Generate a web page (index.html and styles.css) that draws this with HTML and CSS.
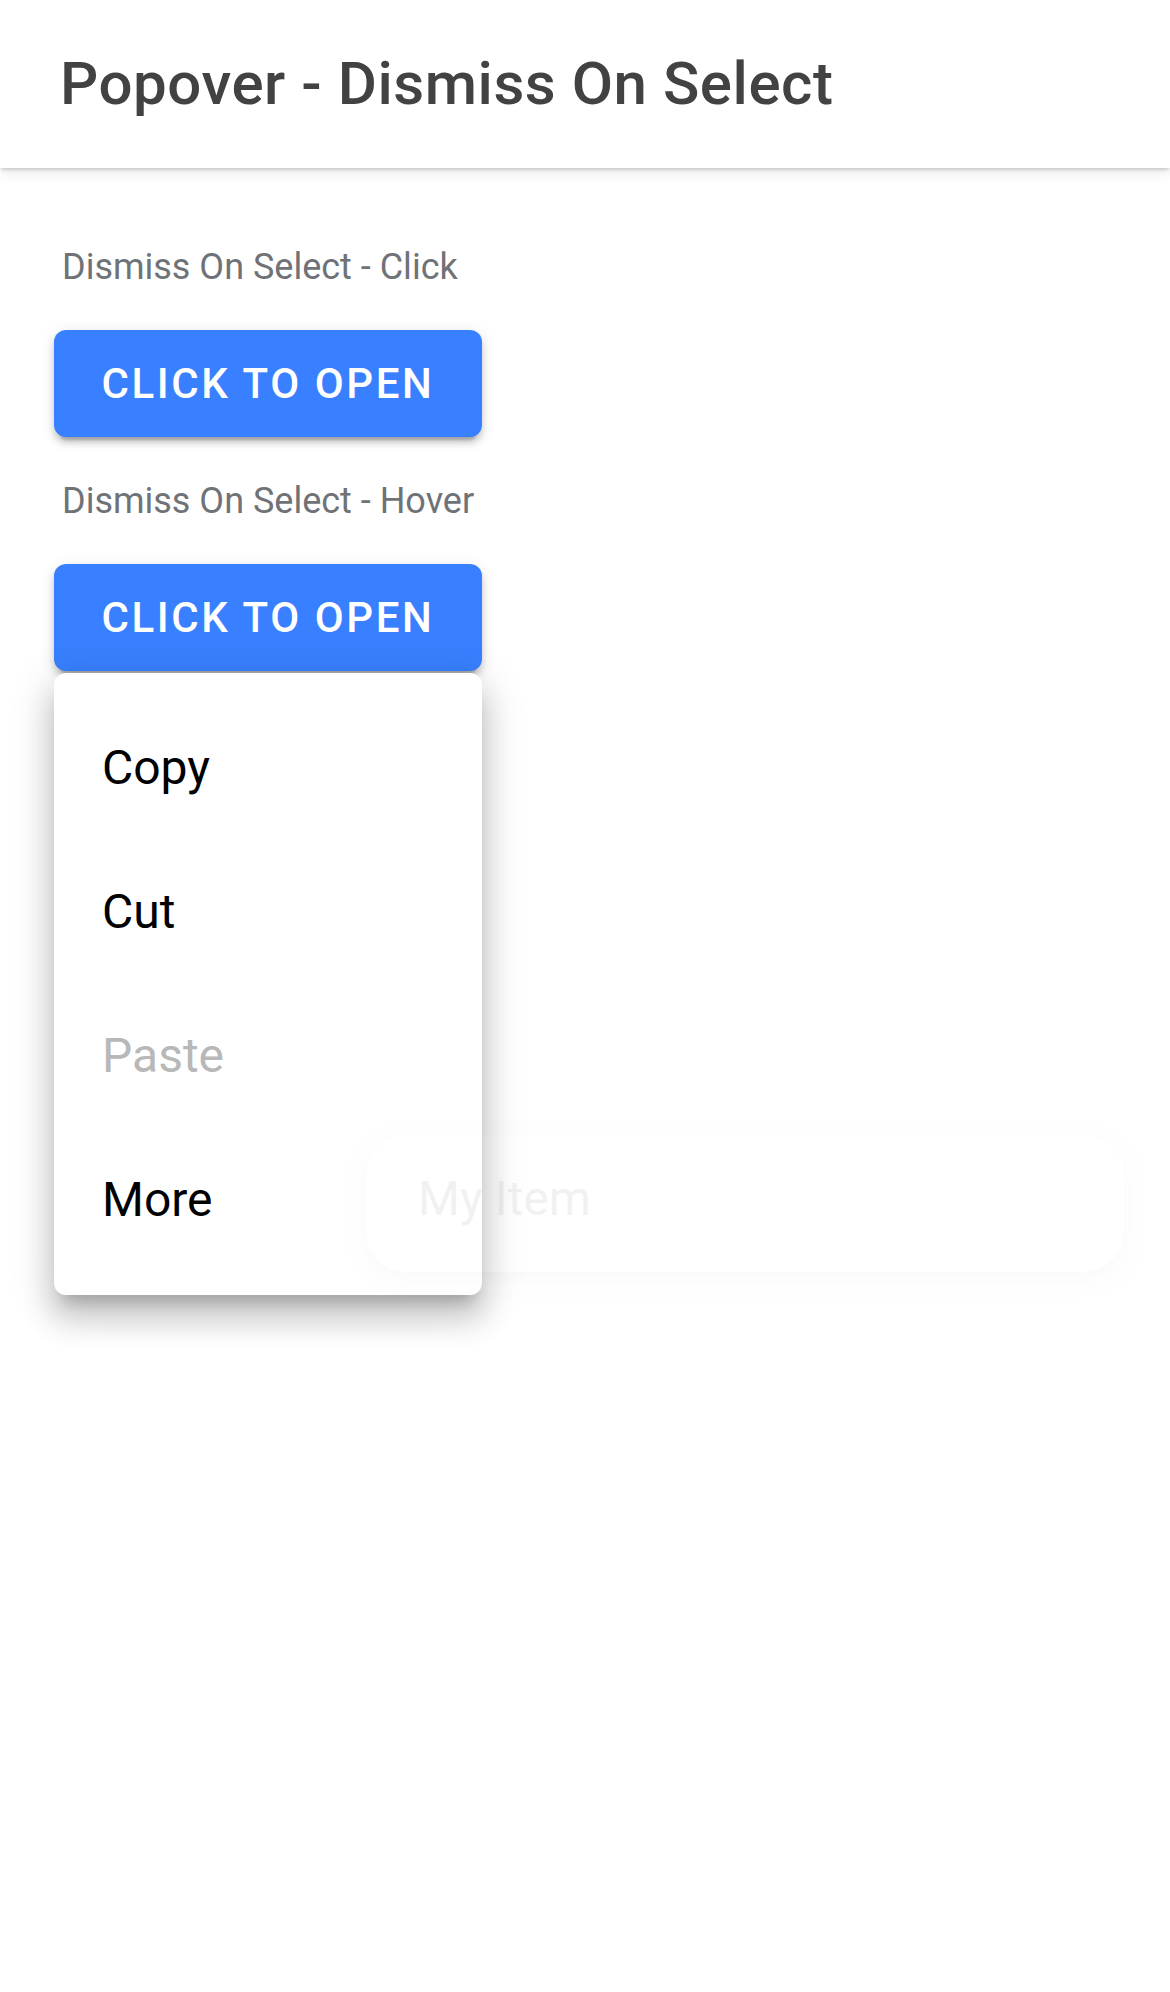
FILE: index.html
```html
<!DOCTYPE html>
<html lang="en">
<head>
<meta charset="utf-8">
<title>Popover - Dismiss On Select</title>
<link rel="stylesheet" href="styles.css">
</head>
<body>
  <header class="toolbar">
    <h1 class="toolbar-title">Popover - Dismiss On Select</h1>
  </header>
  <main class="content">
    <section class="group">
      <p class="group-label">Dismiss On Select - Click</p>
      <button class="btn" type="button">Click to Open</button>
    </section>
    <section class="group">
      <p class="group-label">Dismiss On Select - Hover</p>
      <button class="btn" type="button">Click to Open</button>
    </section>
  </main>

  <div class="popover">
    <ul class="menu">
      <li class="menu-item">Copy</li>
      <li class="menu-item">Cut</li>
      <li class="menu-item is-disabled">Paste</li>
      <li class="menu-item">More</li>
    </ul>
  </div>

  <div class="ghost-card">
    <span class="ghost-text">My Item</span>
  </div>
</body>
</html>
```
FILE: styles.css
```css
* { box-sizing: border-box; }

html, body {
  margin: 0;
  padding: 0;
}

body {
  width: 1170px;
  height: 1992px;
  background: #ffffff;
  font-family: Roboto, "Noto Sans", "Liberation Sans", sans-serif;
  position: relative;
  overflow: hidden;
}

.toolbar {
  height: 168px;
  display: flex;
  align-items: center;
  padding-left: 60px;
  background: #ffffff;
  box-shadow: 0 3px 3px -1px rgba(0, 0, 0, 0.16), 0 6px 12px rgba(0, 0, 0, 0.07);
  position: relative;
  z-index: 2;
}

.toolbar-title {
  margin: 0;
  font-size: 60px;
  font-weight: 500;
  letter-spacing: 0.55px;
  color: #424242;
  line-height: 1;
}

.content {
  display: flex;
  flex-direction: column;
  align-items: flex-start;
  gap: 40px;
  padding: 75px 0 0 54px;
}

.group {
  display: flex;
  flex-direction: column;
  align-items: flex-start;
  gap: 39px;
}

.group-label {
  margin: 0 0 0 8px;
  font-size: 36px;
  line-height: 48px;
  height: 48px;
  color: #6f7277;
}

.btn {
  height: 107px;
  width: 428px;
  border: 0;
  border-radius: 12px;
  background: #3880ff;
  color: #ffffff;
  font-family: Roboto, "Noto Sans", "Liberation Sans", sans-serif;
  font-size: 42px;
  font-weight: 500;
  letter-spacing: 2.6px;
  text-transform: uppercase;
  padding: 0;
  box-shadow: 0 9px 3px -6px rgba(0, 0, 0, 0.2), 0 6px 6px 0 rgba(0, 0, 0, 0.14), 0 3px 15px 0 rgba(0, 0, 0, 0.12);
}

.popover {
  position: absolute;
  left: 54px;
  top: 673px;
  width: 428px;
  background: #ffffff;
  border-radius: 12px;
  box-shadow: 0 15px 15px -9px rgba(0, 0, 0, 0.2), 0 24px 30px 3px rgba(0, 0, 0, 0.14), 0 9px 42px 6px rgba(0, 0, 0, 0.12);
  z-index: 3;
}

.menu {
  list-style: none;
  margin: 0;
  padding: 22px 0 24px;
}

.menu-item {
  height: 144px;
  display: flex;
  align-items: center;
  padding-left: 48px;
  font-size: 48px;
  color: #000000;
}

.menu-item.is-disabled {
  color: #b8b8b8;
}

.ghost-card {
  position: absolute;
  left: 366px;
  top: 1135px;
  width: 758px;
  height: 137px;
  border-radius: 40px;
  background: #ffffff;
  box-shadow: 0 6px 18px rgba(0, 0, 0, 0.4);
  display: flex;
  align-items: center;
  padding: 0 0 10px 52px;
  z-index: 4;
  opacity: 0.05;
}

.ghost-text {
  font-size: 48px;
  color: #000000;
}
```
